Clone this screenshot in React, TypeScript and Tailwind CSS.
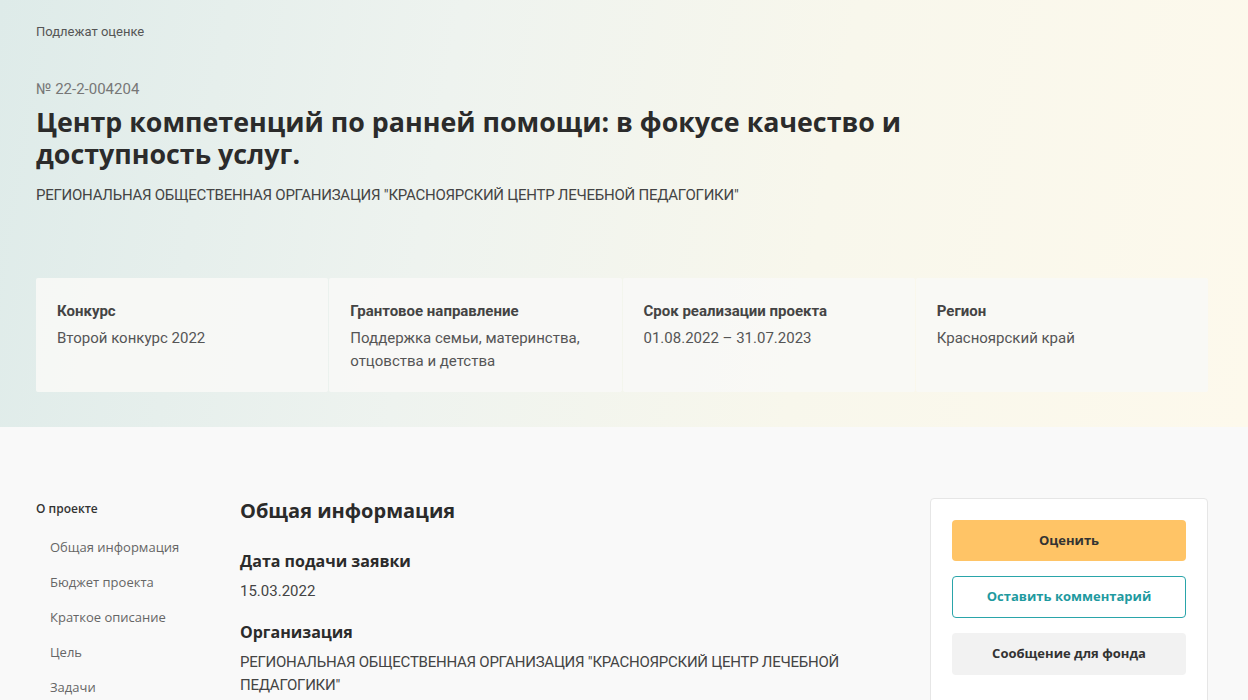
import React from "react";

const pt = "font-['Roboto','Noto_Sans',sans-serif]";
const os = "font-['Open_Sans','Noto_Sans',sans-serif]";

const facts = [
  { label: "Конкурс", value: "Второй конкурс 2022" },
  { label: "Грантовое направление", value: "Поддержка семьи, материнства, отцовства и детства" },
  { label: "Срок реализации проекта", value: "01.08.2022 – 31.07.2023" },
  { label: "Регион", value: "Красноярский край" },
];

const nav = ["Общая информация", "Бюджет проекта", "Краткое описание", "Цель", "Задачи"];

export default function App() {
  return (
    <div className="min-h-[700px] bg-[#f9f9f9] text-[#2b2b2b]">
      <header className="h-[427px] bg-[linear-gradient(100deg,#deebe9_0%,#eef3ef_35%,#f8f7ec_65%,#fdf9ec_100%)] px-9 pt-[22px]">
        <div className={`${pt} text-[13px] text-[#555]`}>Подлежат оценке</div>
        <div className={`${pt} mt-[36px] text-[15px] text-[#777]`}>№ 22-2-004204</div>
        <h1 className={`${os} mt-[6px] max-w-[900px] text-[26.8px] font-bold leading-[32px] text-[#2b2b2b]`}>
          Центр компетенций по ранней помощи: в фокусе качество и доступность услуг.
        </h1>
        <div className={`${pt} mt-[14px] text-[15px] tracking-[-0.25px] text-[#444]`}>
          РЕГИОНАЛЬНАЯ ОБЩЕСТВЕННАЯ ОРГАНИЗАЦИЯ "КРАСНОЯРСКИЙ ЦЕНТР ЛЕЧЕБНОЙ ПЕДАГОГИКИ"
        </div>
        <div className="mt-[71px] grid h-[114px] w-[1172px] grid-cols-4 gap-px">
          {facts.map((f) => (
            <div key={f.label} className={`${pt} rounded-[2px] bg-[#f8f8f6]/90 px-[21px] pt-[22px]`}>
              <div className="text-[15px] font-bold text-[#444]">{f.label}</div>
              <div className="mt-[5px] w-[240px] text-[15px] leading-[23px] text-[#555]">{f.value}</div>
            </div>
          ))}
        </div>
      </header>

      <main className="flex px-9 pt-[71px]">
        <aside className={`${os} w-[204px] shrink-0 pt-[2px]`}>
          <div className="text-[12px] font-semibold text-[#333]">О проекте</div>
          <ul className="mt-[20px] flex flex-col gap-[17px] pl-[14px]">
            {nav.map((n) => (
              <li key={n} className="text-[13px] leading-[18px] text-[#666]">
                {n}
              </li>
            ))}
          </ul>
        </aside>

        <section className="w-[620px] shrink-0">
          <h2 className={`${os} text-[20px] font-bold leading-[26px] text-[#2b2b2b]`}>Общая информация</h2>
          <div className={`${os} mt-[25px] text-[16px] font-bold text-[#2b2b2b]`}>Дата подачи заявки</div>
          <div className={`${pt} mt-[7px] text-[15px] text-[#444]`}>15.03.2022</div>
          <div className={`${os} mt-[17px] text-[16px] font-bold text-[#2b2b2b]`}>Организация</div>
          <div className={`${pt} mt-[7px] text-[15px] leading-[23px] tracking-[-0.25px] text-[#444]`}>
            РЕГИОНАЛЬНАЯ ОБЩЕСТВЕННАЯ ОРГАНИЗАЦИЯ "КРАСНОЯРСКИЙ ЦЕНТР ЛЕЧЕБНОЙ ПЕДАГОГИКИ"
          </div>
        </section>

        <aside className="ml-[70px] h-[220px] w-[278px] shrink-0 rounded-[4px] border border-[#e6e6e6] bg-white px-[21px] pt-[21px]">
          <div className={`${os} flex flex-col gap-[15px] text-[13px] font-bold`}>
            <button className="h-[41px] rounded-[4px] bg-[#ffc466] text-[#333]">Оценить</button>
            <button className="h-[42px] rounded-[4px] border-[1.5px] border-[#2aa5aa] text-[#1f9aa0]">
              Оставить комментарий
            </button>
            <button className="h-[42px] rounded-[4px] bg-[#f2f2f2] text-[#333]">Сообщение для фонда</button>
          </div>
        </aside>
      </main>
    </div>
  );
}
